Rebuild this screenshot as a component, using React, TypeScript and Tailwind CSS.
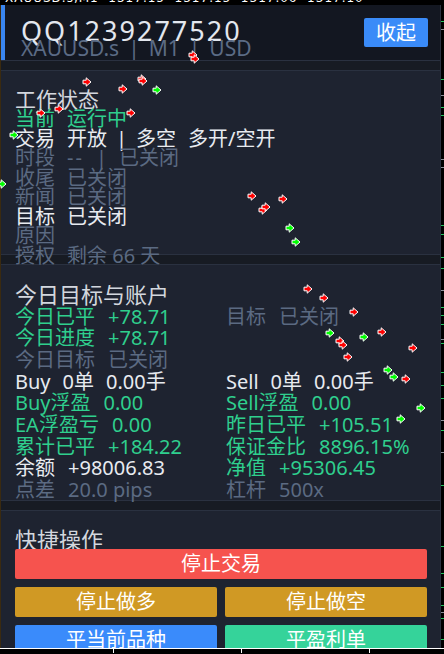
import type { ReactNode } from 'react'

const FONT = { fontFamily: '"Noto Sans", "Noto Sans CJK SC", sans-serif' }

// chart arrow markers that MT4 draws above the panel
const arrows: [number, number, 'r' | 'g'][] = [
  [193, 55, 'r'], [195, 59, 'r'], [142, 79, 'r'],
  [87, 82, 'r'], [143, 81, 'r'], [123, 89, 'r'], [157, 90, 'g'],
  [41, 113, 'r'], [59, 109, 'r'], [131, 113, 'r'], [14, 135, 'g'], [2, 184, 'g'],
  [252, 196, 'r'], [283, 199, 'r'], [263, 210, 'r'], [266, 207, 'r'],
  [290, 228, 'g'], [296, 242, 'g'],
  [308, 289, 'r'], [324, 298, 'r'], [354, 312, 'r'], [330, 333, 'g'],
  [340, 341, 'r'], [343, 345, 'r'], [364, 337, 'g'], [382, 332, 'r'],
  [413, 348, 'r'], [348, 357, 'r'], [388, 370, 'g'], [394, 377, 'g'],
  [406, 379, 'r'], [421, 408, 'g'], [401, 419, 'g'],
]

const greenTicks = [21, 79, 107, 115, 225, 234, 257, 268, 307, 315, 324, 343, 372, 385, 398, 430, 485, 546, 573, 587, 605, 618, 639]
const grayTicks = [29, 95, 159, 167, 290, 339, 420, 452, 612]

function Arrow({ x, y, c }: { x: number; y: number; c: 'r' | 'g' }) {
  return (
    <svg
      className="absolute z-20"
      style={{ left: x - 5, top: y - 5 }}
      width="10"
      height="10"
      viewBox="0 0 10 10"
    >
      <polygon
        points="1,3.2 4.2,3.2 4.2,0.8 9,5 4.2,9.2 4.2,6.8 1,6.8"
        fill={c === 'r' ? '#ff0000' : '#00ff00'}
        stroke="#ffffff"
        strokeWidth="1"
        strokeLinejoin="miter"
      />
    </svg>
  )
}

function Strip() {
  return <div className="h-[11px] shrink-0 bg-[#171b23] border-y border-[#2a3140]" />
}

function Row({ children, className = '' }: { children: ReactNode; className?: string }) {
  return <div className={`flex gap-[12px] whitespace-nowrap ${className}`}>{children}</div>
}

function Cell({ label, value, color }: { label: string; value?: string; color: string }) {
  return (
    <div className={`flex gap-[13px] whitespace-nowrap ${color}`}>
      <span>{label}</span>
      {value && <span>{value}</span>}
    </div>
  )
}

const GREEN = 'text-[#2fcf8e]'
const GRAY = 'text-[#5b6a82]'
const WHITE = 'text-[#e8ebf0]'

export default function App() {
  return (
    <div className="relative w-[444px] h-[654px] overflow-hidden bg-black flex flex-col" style={FONT}>
      {/* chart header line, mostly hidden under the panel */}
      <div className="h-[5px] shrink-0 overflow-hidden relative">
        <div
          className="absolute left-[5px] top-[-8px] text-[12px] leading-[12px] text-white whitespace-pre tracking-[1px]"
          style={{ fontFamily: '"DejaVu Sans", sans-serif' }}
        >
          XAUUSD.s,M1  1317.15  1317.15  1317.06  1317.10
        </div>
      </div>

      <div className="flex flex-1 min-h-0">
        {/* left chart sliver */}
        <div className="w-[1px] shrink-0 bg-[#3a2a10]" />

        {/* panel */}
        <div className="w-[440px] shrink-0 flex flex-col border-r border-[#2a3140] overflow-hidden text-[20px]">
          {/* header */}
          <div className="h-[55px] shrink-0 flex bg-[#131721]">
            <div className="w-[4px] bg-[#3a86f0]" />
            <div className="flex-1 flex justify-between pl-[16px] pr-[12px]">
              <div className="flex flex-col pt-[13px]">
                <div className="text-[27px] leading-[26px] tracking-[2px] text-[#e3e7ee]">QQ1239277520</div>
                <div className="-mt-[6px] flex gap-[9px] text-[21px] leading-[21px] text-[#5b6b85] whitespace-nowrap">
                  <span>XAUUSD.s</span>
                  <span>|</span>
                  <span>M1</span>
                  <span>|</span>
                  <span>USD</span>
                </div>
              </div>
              <button className="mt-[13px] h-[29px] w-[64px] bg-[#3a8bf8] text-white text-[20px] leading-[29px] rounded-[2px]">
                收起
              </button>
            </div>
          </div>

          <Strip />

          {/* 工作状态 — last row runs over the strip below, as in MT4 */}
          <div className="relative z-10 h-[183px] shrink-0 bg-[#1e2330] pl-[14px] pt-[18px] leading-[19.5px]">
            <div className="text-[21px] leading-[20px] text-[#d3d7de]">工作状态</div>
            <Row className={GREEN}>
              <span>当前</span>
              <span>运行中</span>
            </Row>
            <Row className={WHITE}>
              <span>交易</span>
              <span>开放</span>
              <span className="-mx-[3px]">|</span>
              <span>多空</span>
              <span>多开/空开</span>
            </Row>
            <Row className={GRAY}>
              <span>时段</span>
              <span className="tracking-[2px]">--</span>
              <span>|</span>
              <span>已关闭</span>
            </Row>
            <Row className={GRAY}>
              <span>收尾</span>
              <span>已关闭</span>
            </Row>
            <Row className={GRAY}>
              <span>新闻</span>
              <span>已关闭</span>
            </Row>
            <Row className={WHITE}>
              <span>目标</span>
              <span>已关闭</span>
            </Row>
            <Row className={GRAY}>
              <span>原因</span>
            </Row>
            <Row className={GRAY}>
              <span>授权</span>
              <span>剩余 66 天</span>
            </Row>
          </div>

          <Strip />

          {/* 今日目标与账户 */}
          <div className="relative z-10 h-[235px] shrink-0 bg-[#1e2330] pl-[14px] pt-[19px] leading-[21.7px]">
            <div className="text-[22px] leading-[21.5px] text-[#d3d7de]">今日目标与账户</div>
            <div className="grid grid-cols-[211px_1fr]">
              <Cell label="今日已平" value="+78.71" color={GREEN} />
              <Cell label="目标" value="已关闭" color={GRAY} />
              <Cell label="今日进度" value="+78.71" color={GREEN} />
              <div />
              <Cell label="今日目标" value="已关闭" color={GRAY} />
              <div />
              <Row className={WHITE}>
                <span>Buy</span>
                <span>0单</span>
                <span>0.00手</span>
              </Row>
              <Row className={WHITE}>
                <span>Sell</span>
                <span>0单</span>
                <span>0.00手</span>
              </Row>
              <Cell label="Buy浮盈" value="0.00" color={GREEN} />
              <Cell label="Sell浮盈" value="0.00" color={GREEN} />
              <Cell label="EA浮盈亏" value="0.00" color={GREEN} />
              <Cell label="昨日已平" value="+105.51" color={GREEN} />
              <Cell label="累计已平" value="+184.22" color={GREEN} />
              <Cell label="保证金比" value="8896.15%" color={GREEN} />
              <Cell label="余额" value="+98006.83" color={WHITE} />
              <Cell label="净值" value="+95306.45" color={GREEN} />
              <Cell label="点差" value="20.0 pips" color={GRAY} />
              <Cell label="杠杆" value="500x" color={GRAY} />
            </div>
          </div>

          <Strip />

          {/* 快捷操作 */}
          <div className="flex-1 bg-[#1e2330] pl-[14px] pr-[13px] pt-[18px]">
            <div className="text-[22px] leading-[20px] text-[#d3d7de]">快捷操作</div>
            <div className="flex flex-col gap-[8px] text-white text-[20px]">
              <button className="h-[30px] rounded-[2px] bg-[#f6534e]">停止交易</button>
              <div className="grid grid-cols-2 gap-[8px]">
                <button className="h-[30px] rounded-[2px] bg-[#d09924]">停止做多</button>
                <button className="h-[30px] rounded-[2px] bg-[#d09924]">停止做空</button>
              </div>
              <div className="grid grid-cols-2 gap-[8px]">
                <button className="h-[30px] rounded-[2px] bg-[#3a8bfb]">平当前品种</button>
                <button className="h-[30px] rounded-[2px] bg-[#35d39a]">平盈利单</button>
              </div>
            </div>
          </div>
        </div>

        {/* price scale sliver */}
        <div className="relative flex-1" />
      </div>

      {/* time axis */}
      <div className="h-[6px] shrink-0 border-t border-white bg-black relative">
        <div className="absolute left-[113px] top-0 w-px h-[4px] bg-white" />
        <div className="absolute left-[241px] top-0 w-px h-[4px] bg-white" />
        <div className="absolute left-[369px] top-0 w-px h-[4px] bg-white" />
      </div>

      {/* price scale ticks */}
      {greenTicks.map((y) => (
        <div key={`g${y}`} className="absolute right-0 w-[3px] h-px bg-[#22c55e]" style={{ top: y }} />
      ))}
      {grayTicks.map((y) => (
        <div key={`s${y}`} className="absolute right-0 w-[3px] h-px bg-[#8a8f99]" style={{ top: y }} />
      ))}

      {arrows.map(([x, y, c], i) => (
        <Arrow key={i} x={x} y={y} c={c} />
      ))}
    </div>
  )
}
